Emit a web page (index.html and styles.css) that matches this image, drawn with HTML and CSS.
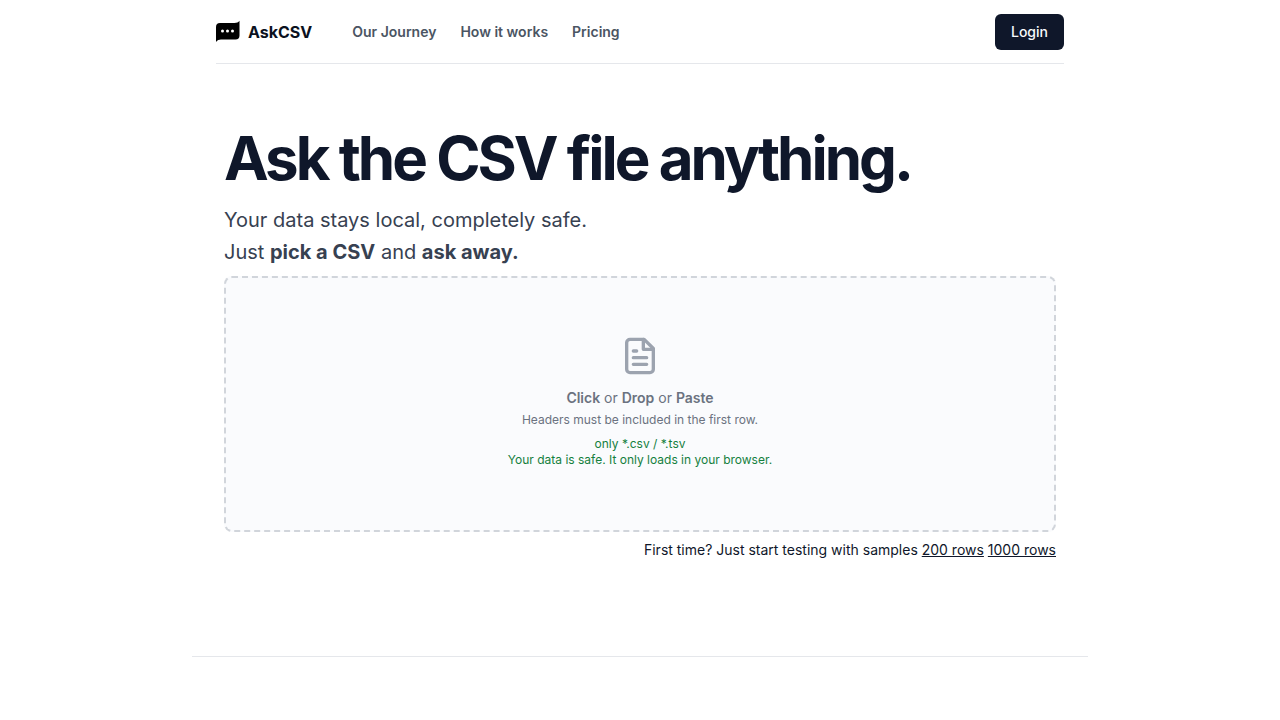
FILE: index.html
```html
<!DOCTYPE html>
<html lang="en">
<head>
<meta charset="utf-8">
<meta name="viewport" content="width=device-width, initial-scale=1">
<title>AskCSV</title>
<link rel="stylesheet" href="styles.css">
</head>
<body>
<div class="page">
  <header class="header">
    <a class="brand" href="#">
      <svg class="brand-icon" viewBox="0 0 24 24" aria-hidden="true">
        <path fill="#000" d="M23.500 .8V15.500a4 4 0 0 1-4 4H5c-2 0-3.500.7-5 2.500V7a4 4 0 0 1 4-4h14.500c2.200 0 4-.6 5-2.200z"/>
        <g fill="#fff"><circle cx="6.500" cy="11" r="1.500"/><circle cx="11.500" cy="11" r="1.500"/><circle cx="16.500" cy="11" r="1.500"/></g>
      </svg>
      <span>AskCSV</span>
    </a>
    <nav class="nav">
      <a href="#">Our Journey</a>
      <a href="#">How it works</a>
      <a href="#">Pricing</a>
    </nav>
    <button class="login" type="button">Login</button>
  </header>
  <main class="main">
    <h1 class="title">Ask the CSV file anything.</h1>
    <p class="lead">Your data stays local, completely safe.<br>Just <strong>pick a CSV</strong> and <strong>ask away.</strong></p>
    <button class="dropzone" type="button">
      <svg class="file-icon" viewBox="0 0 24 24" fill="none" stroke="currentColor" stroke-width="2" stroke-linecap="round" stroke-linejoin="round" aria-hidden="true">
        <path d="M14.500 2H6a2 2 0 0 0-2 2v16a2 2 0 0 0 2 2h12a2 2 0 0 0 2-2V7.500L14.500 2z"/>
        <path d="M14 2v6h6M8 9h2M8 13h8M8 17h8"/>
      </svg>
      <span class="prompt"><strong>Click</strong> or <strong>Drop</strong> or <strong>Paste</strong></span>
      <span class="hint">Headers must be included in the first row.</span>
      <span class="safe">only *.csv / *.tsv<br>Your data is safe. It only loads in your browser.</span>
    </button>
    <p class="samples">First time? Just start testing with samples <a href="#">200 rows</a> <a href="#">1000 rows</a></p>
  </main>
  <hr class="divider">
</div>
</body>
</html>
```
FILE: styles.css
```css
* { box-sizing: border-box; }
body { margin: 0; font-family: Inter, "Liberation Sans", sans-serif; color: #0f172a; background: #fff; }
h1, p { margin: 0; }
a { color: inherit; }
.page { max-width: 896px; margin: 0 auto; }
.header { display: flex; align-items: center; height: 64px; margin: 0 24px; border-bottom: 1px solid #e5e7eb; }
.brand { display: flex; align-items: center; gap: 8px; color: #0b1120; font-size: 16px; font-weight: 700; line-height: 24px; text-decoration: none; }
.brand-icon { width: 24px; height: 24px; }
.nav { display: flex; gap: 24px; margin-left: 40px; color: #4b5563; font-size: 14px; font-weight: 600; line-height: 20px; }
.nav a { text-decoration: none; }
.login { margin-left: auto; padding: 8px 16px; border: 0; border-radius: 6px; background: #0f172a; color: #f8fafc; font: 500 14px/20px Inter, sans-serif; }
.main { padding: 64px 32px 96px; }
.title { font-size: 60px; font-weight: 700; line-height: 60px; letter-spacing: -3px; }
.lead { margin-top: 16px; color: #374151; font-size: 20px; line-height: 32px; }
.dropzone { display: flex; flex-direction: column; align-items: center; justify-content: center; width: 100%; min-height: 256px; margin-top: 8px; padding: 20px 24px 24px; border: 2px dashed #d1d5db; border-radius: 8px; background: #fafbfd; color: #6b7280; font: 14px/20px Inter, sans-serif; }
.file-icon { width: 40px; height: 40px; margin-bottom: 12px; color: #9ca3af; }
.prompt { margin-bottom: 4px; }
.prompt strong { font-weight: 600; }
.hint { font-size: 12px; line-height: 16px; }
.safe { margin-top: 8px; color: #15803d; font-size: 12px; line-height: 16px; }
.samples { margin-top: 8px; font-size: 14px; line-height: 20px; text-align: right; }
.divider { margin: 0; border: 0; border-top: 1px solid #e5e7eb; }
```
